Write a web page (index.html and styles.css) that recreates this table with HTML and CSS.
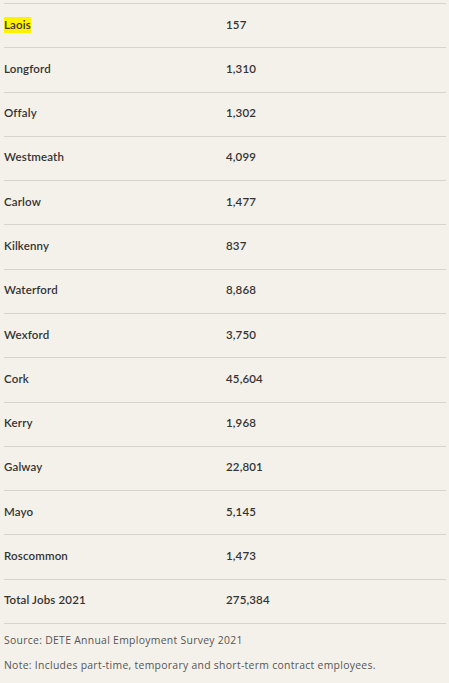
FILE: index.html
```html
<!DOCTYPE html>
<html lang="en">
<head>
<meta charset="utf-8">
<title>Jobs by County</title>
<link rel="stylesheet" href="styles.css">
</head>
<body>
<div class="wrap">
  <table class="jobs">
    <tbody>
      <tr><td class="county"><mark class="hl">Laois</mark></td><td class="num">157</td></tr>
      <tr><td class="county">Longford</td><td class="num">1,310</td></tr>
      <tr><td class="county">Offaly</td><td class="num">1,302</td></tr>
      <tr><td class="county">Westmeath</td><td class="num">4,099</td></tr>
      <tr><td class="county">Carlow</td><td class="num">1,477</td></tr>
      <tr><td class="county">Kilkenny</td><td class="num">837</td></tr>
      <tr><td class="county">Waterford</td><td class="num">8,868</td></tr>
      <tr><td class="county">Wexford</td><td class="num">3,750</td></tr>
      <tr><td class="county">Cork</td><td class="num">45,604</td></tr>
      <tr><td class="county">Kerry</td><td class="num">1,968</td></tr>
      <tr><td class="county">Galway</td><td class="num">22,801</td></tr>
      <tr><td class="county">Mayo</td><td class="num">5,145</td></tr>
      <tr><td class="county">Roscommon</td><td class="num">1,473</td></tr>
      <tr><td class="county">Total Jobs 2021</td><td class="num">275,384</td></tr>
    </tbody>
  </table>
  <p class="note">Source: DETE Annual Employment Survey 2021</p>
  <p class="note">Note: Includes part-time, temporary and short-term contract employees.</p>
</div>
</body>
</html>
```
FILE: styles.css
```css
html, body {
  margin: 0;
  padding: 0;
  background: #f4f1ea;
}
body {
  font-family: Lato, "Open Sans", "Liberation Sans", sans-serif;
  color: #333;
}
.wrap {
  padding: 3px 3px 0 4px;
}
.jobs {
  width: 442px;
  border-collapse: collapse;
  border-top: 1px solid #d7d3ca;
}
.jobs tr {
  height: 44.29px;
  border-bottom: 1px solid #d7d3ca;
}
.jobs td {
  padding: 0 0 3px;
  font-size: 11.5px;
  font-weight: 600;
  letter-spacing: 0.15px;
  vertical-align: middle;
}
.county {
  width: 222px;
}
.hl {
  background: #fff200;
  color: #333;
  padding: 1px 0 2px;
}
.note {
  margin: 0;
  font-family: "Open Sans", Lato, sans-serif;
  font-size: 10.4px;
  letter-spacing: 0.3px;
  color: #555;
  font-weight: 400;
  line-height: 25px;
}
.note:first-of-type {
  margin-top: 4px;
}
```
